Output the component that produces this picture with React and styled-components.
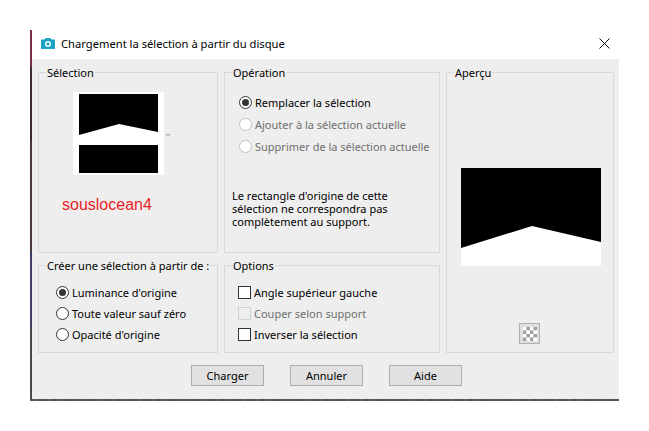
import React from "react";
import styled, { createGlobalStyle } from "styled-components";

const GlobalStyle = createGlobalStyle`
  html, body {
    margin: 0;
    background: #fff;
    font-family: "Noto Sans", "Open Sans", sans-serif;
    font-size: 11px;
    color: #000;
  }
`;

const Page = styled.div`
  width: 649px;
  height: 431px;
  padding: 30px 30px 0;
  box-sizing: border-box;
  overflow: hidden;
`;

// the desktop wallpaper only shows as a thin noisy edge on the left and bottom
const Dialog = styled.div`
  width: 589px;
  height: 371px;
  box-sizing: border-box;
  padding: 0 0 2px 2px;
  display: flex;
  flex-direction: column;
  background:
    repeating-linear-gradient(90deg, #5a5652 0 5px, #64605c 5px 8px, #524e4c 8px 13px) bottom / 100% 2px no-repeat,
    linear-gradient(180deg, #7a3040 0 10%, #3f2a30 10% 30%, #4a3a40 30% 60%, #3c3c68 60% 80%, #4a4a4a 80%);
`;

const TitleBar = styled.div`
  height: 29px;
  flex: none;
  box-sizing: border-box;
  background: #fff;
  display: flex;
  align-items: center;
  padding: 0 9px 2px 9px;
  gap: 6px;
  font-size: 11.2px;
`;

const TitleText = styled.span`
  flex: 1;
`;

const Body = styled.div`
  flex: 1;
  background: #eeeeee;
  padding: 7px 5px 0 6px;
  display: flex;
  flex-direction: column;
`;

const Panels = styled.div`
  display: grid;
  grid-template-columns: 180px 216px 168px;
  grid-template-rows: 187px 94px;
  column-gap: 6px;
  row-gap: 6px;
`;

const Group = styled.fieldset`
  margin: 0;
  min-width: 0;
  padding: 0;
  border: 1px solid #d9d9d9;
  box-sizing: border-box;
  grid-row: ${(p) => p.$rows || "auto"};
  grid-column: ${(p) => p.$col || "auto"};
`;

const Legend = styled.legend`
  margin-left: 7px;
  padding: 1px 1px 0;
  font-size: 11px;
  line-height: 12px;
`;

const Options = styled.div`
  display: flex;
  flex-direction: column;
  gap: ${(p) => p.$gap || "4px"};
  padding: ${(p) => p.$pad || "12px 0 0 17px"};
`;

const Option = styled.div`
  display: flex;
  align-items: center;
  height: 17px;
  gap: 3px;
  white-space: nowrap;
  color: ${(p) => (p.$off ? "#6f6f6f" : "#000")};
`;

const Radio = styled.span`
  width: 11px;
  height: 11px;
  border: 1px solid ${(p) => (p.$off ? "#c2c2c2" : "#333")};
  border-radius: 50%;
  background: #fff;
  display: flex;
  align-items: center;
  justify-content: center;
  flex: none;

  &::after {
    content: "";
    display: ${(p) => (p.$on ? "block" : "none")};
    width: 7px;
    height: 7px;
    border-radius: 50%;
    background: #333;
  }
`;

const Check = styled.span`
  width: 11px;
  height: 11px;
  border: 1px solid ${(p) => (p.$off ? "#d0d0d0" : "#333")};
  background: ${(p) => (p.$off ? "#eeeeee" : "#fff")};
  flex: none;
`;

const ThumbWrap = styled.div`
  display: flex;
  align-items: flex-end;
  margin: 13px 0 0 34px;
  gap: 1px;
`;

const Arrow = styled.span`
  width: 0;
  height: 0;
  border: 3px solid transparent;
  border-top: 3px solid #bdbdbd;
  margin-bottom: 35px;
`;

const RedName = styled.div`
  color: #ed1c24;
  font-family: "Liberation Sans", Arial, sans-serif;
  font-size: 16px;
  line-height: 20px;
  margin: 20px 0 0 23px;
`;

const Note = styled.div`
  margin: 34px 0 0 7px;
  font-size: 11px;
  line-height: 13px;
`;

const PreviewPanel = styled.div`
  display: flex;
  flex-direction: column;
  align-items: center;
`;

const PreviewImage = styled.svg`
  display: block;
  margin: 89px 0 0 2px;
`;

const SwatchButton = styled.div`
  width: 19px;
  height: 19px;
  margin: 57px 1px 0 0;
  border: 1px solid #b0b0b0;
  background: #dfdfdf;
  display: flex;
  align-items: center;
  justify-content: center;
`;

const Footer = styled.div`
  display: flex;
  gap: 26px;
  margin: 12px 0 0 153px;
`;

const Button = styled.button`
  width: 73px;
  height: 21px;
  padding: 0;
  border: 1px solid #adadad;
  background: #e1e1e1;
  font: inherit;
  color: #000;
`;

function CameraIcon() {
  return (
    <svg width="14" height="11" viewBox="0 0 14 11">
      <path d="M0 1.5h3.5L4.5 0h5l1 1.5H14V11H0z" fill="#1ba1c4" />
      <circle cx="7" cy="6" r="3" fill="#fff" />
      <circle cx="7" cy="6" r="1.6" fill="#1ba1c4" />
    </svg>
  );
}

function CloseIcon() {
  return (
    <svg width="11" height="11" viewBox="0 0 11 11">
      <path d="M.5.5l10 10M10.5.5l-10 10" stroke="#111" strokeWidth="1" fill="none" />
    </svg>
  );
}

function Thumbnail() {
  return (
    <svg width="91" height="83" viewBox="0 0 91 83">
      <rect width="91" height="83" fill="#fff" />
      <path d="M6 2h79v38L46 32 6 43z" fill="#000" />
      <rect x="6" y="53" width="79" height="28" fill="#000" />
    </svg>
  );
}

function Preview() {
  return (
    <PreviewImage width="140" height="98" viewBox="0 0 140 98">
      <rect width="140" height="98" fill="#fff" />
      <path d="M0 0h140v74L71 58 0 80z" fill="#000" />
    </PreviewImage>
  );
}

function Swatch() {
  const cells = [];
  for (let y = 0; y < 4; y++) {
    for (let x = 0; x < 4; x++) {
      cells.push(
        <rect
          key={`${x}-${y}`}
          x={x * 3.5}
          y={y * 3.5}
          width="3.5"
          height="3.5"
          fill={(x + y) % 2 ? "#a0a0a0" : "#fff"}
        />
      );
    }
  }
  return (
    <svg width="14" height="14" viewBox="0 0 14 14">
      {cells}
    </svg>
  );
}

export default function App() {
  return (
    <Page>
      <GlobalStyle />
      <Dialog>
        <TitleBar>
          <CameraIcon />
          <TitleText>Chargement la sélection à partir du disque</TitleText>
          <CloseIcon />
        </TitleBar>
        <Body>
          <Panels>
            <Group>
              <Legend>Sélection</Legend>
              <ThumbWrap>
                <Thumbnail />
                <Arrow />
              </ThumbWrap>
              <RedName>souslocean4</RedName>
            </Group>
            <Group>
              <Legend>Opération</Legend>
              <Options $pad="15px 0 0 14px" $gap="5px">
                <Option>
                  <Radio $on />
                  Remplacer la sélection
                </Option>
                <Option $off>
                  <Radio $off />
                  Ajouter à la sélection actuelle
                </Option>
                <Option $off>
                  <Radio $off />
                  Supprimer de la sélection actuelle
                </Option>
              </Options>
              <Note>
                Le rectangle d'origine de cette
                <br />
                sélection ne correspondra pas
                <br />
                complètement au support.
              </Note>
            </Group>
            <Group $rows="1 / span 2" $col="3">
              <Legend>Aperçu</Legend>
              <PreviewPanel>
                <Preview />
                <SwatchButton>
                  <Swatch />
                </SwatchButton>
              </PreviewPanel>
            </Group>
            <Group>
              <Legend>Créer une sélection à partir de :</Legend>
              <Options>
                <Option>
                  <Radio $on />
                  Luminance d'origine
                </Option>
                <Option>
                  <Radio />
                  Toute valeur sauf zéro
                </Option>
                <Option>
                  <Radio />
                  Opacité d'origine
                </Option>
              </Options>
            </Group>
            <Group>
              <Legend>Options</Legend>
              <Options $pad="12px 0 0 13px">
                <Option>
                  <Check />
                  Angle supérieur gauche
                </Option>
                <Option $off>
                  <Check $off />
                  Couper selon support
                </Option>
                <Option>
                  <Check />
                  Inverser la sélection
                </Option>
              </Options>
            </Group>
          </Panels>
          <Footer>
            <Button>Charger</Button>
            <Button>Annuler</Button>
            <Button>Aide</Button>
          </Footer>
        </Body>
      </Dialog>
    </Page>
  );
}
